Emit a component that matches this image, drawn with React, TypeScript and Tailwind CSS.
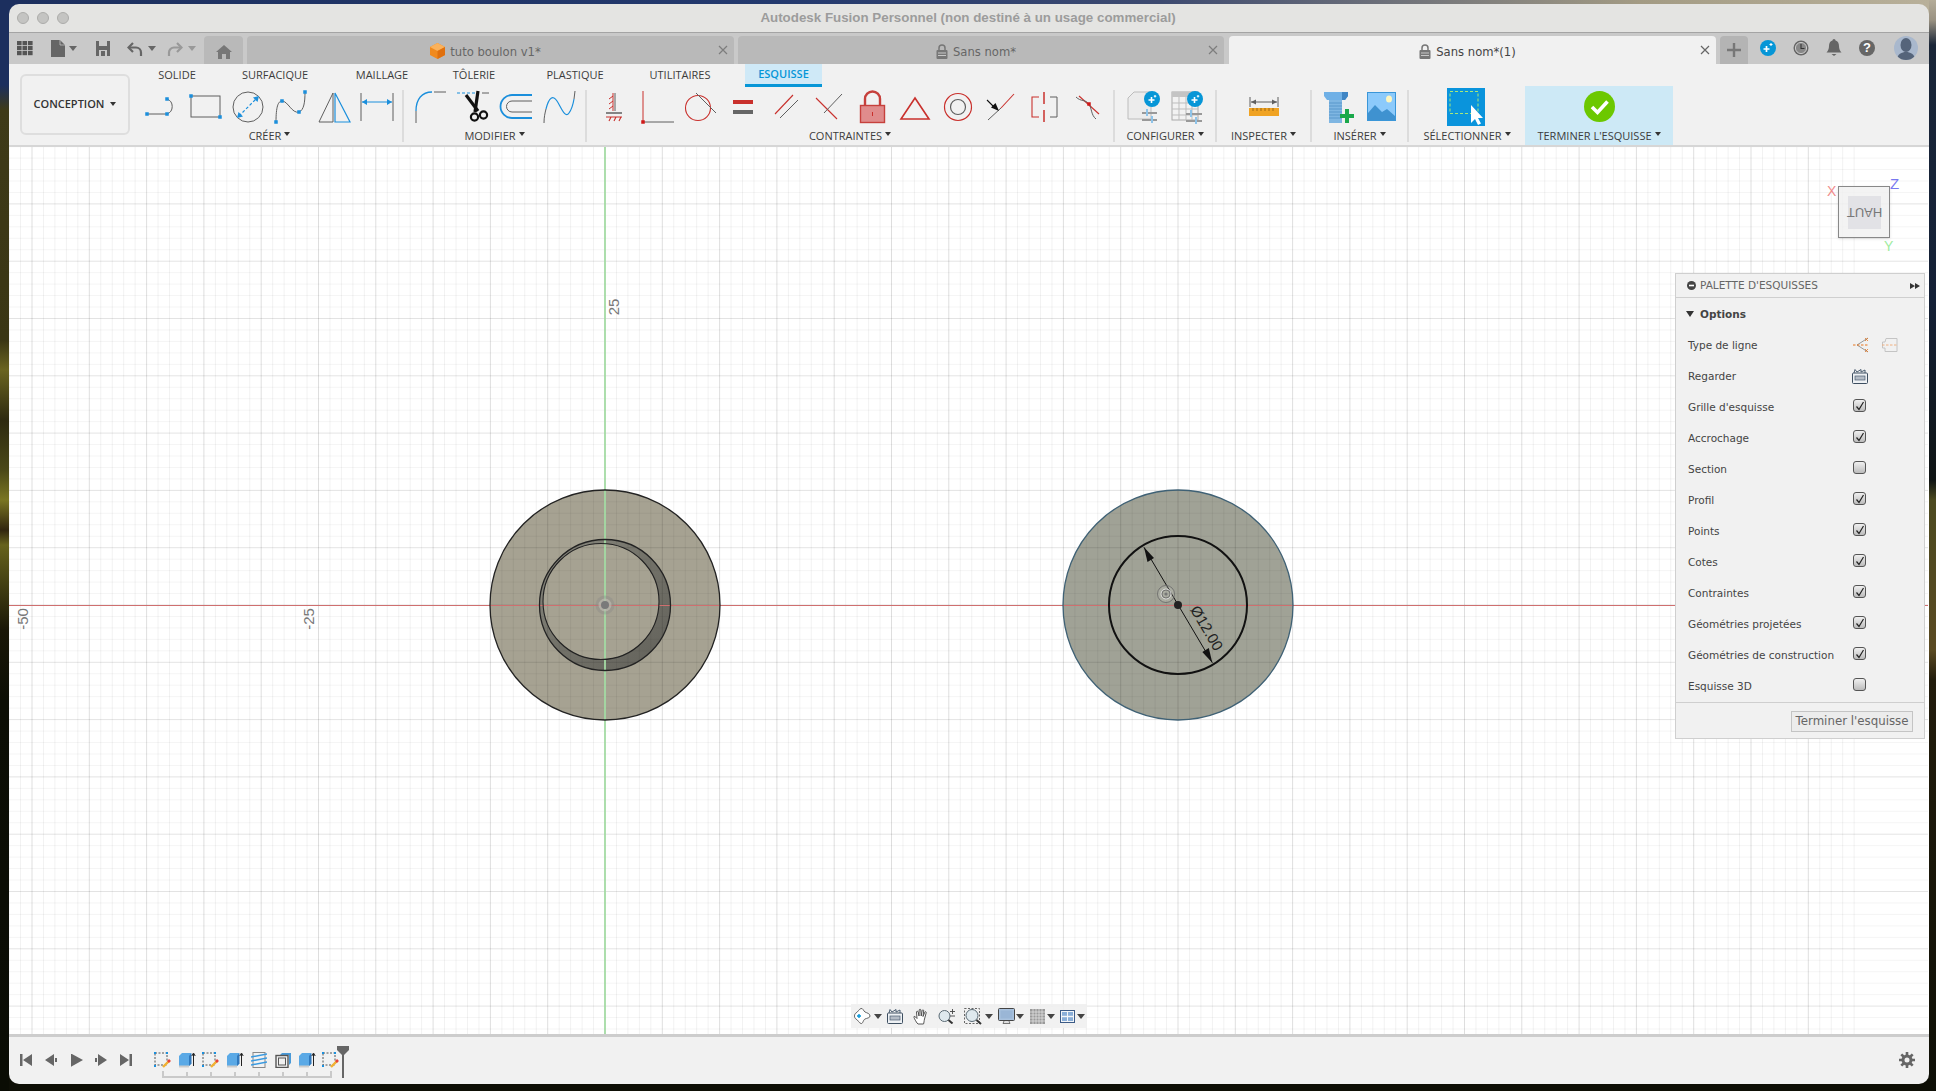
import React from "react";

const GRAY = "#5f5f5f";
const BLUE = "#1b8fdc";
const RED = "#c9302c";

const Ico = ({ children, s = 40 }: { children: React.ReactNode; s?: number }) => (
  <svg width={s} height={s} viewBox={`0 0 ${s} ${s}`} fill="none" className="shrink-0">
    {children}
  </svg>
);
const Sq = ({ x, y, c = BLUE, s = 3.5 }: { x: number; y: number; c?: string; s?: number }) => (
  <rect x={x - s / 2} y={y - s / 2} width={s} height={s} fill={c} />
);
const Caret = ({ c = "#444" }: { c?: string }) => (
  <svg width="8" height="5" viewBox="0 0 8 5" className="shrink-0">
    <path d="M0 0H8L4 5Z" fill={c} />
  </svg>
);
const SmallCaret = () => (
  <svg width="6" height="4" viewBox="0 0 6 4" className="shrink-0 -mt-[2px]">
    <path d="M0 0H6L3 4Z" fill="#333" />
  </svg>
);
const Badge = ({ x, y }: { x: number; y: number }) => (
  <g>
    <circle cx={x} cy={y} r="8" fill="#0696d7" />
    <path d={`M${x - 3.5} ${y + 1}h6M${x - 0.5} ${y - 2}v6`} stroke="#fff" strokeWidth="1.6" />
    <path d={`M${x + 3} ${y - 4}v2.5M${x + 1.8} ${y - 2.8}h2.5`} stroke="#fff" strokeWidth="1" />
  </g>
);

const createIcons = [
  <Ico key="a"><path d="M5 27H25A8 8 0 0 0 25 12" stroke={GRAY} strokeWidth="1" /><Sq x={5} y={27} /><Sq x={25} y={27} /><Sq x={25} y={12} /></Ico>,
  <Ico key="b"><rect x="6" y="9" width="29" height="21" stroke={GRAY} strokeWidth="1" /><Sq x={6} y={9} /><Sq x={35} y={30} /></Ico>,
  <Ico key="c"><circle cx="20" cy="20" r="15" stroke={GRAY} strokeWidth="1" /><path d="M11 29L29 11" stroke={BLUE} strokeWidth="1.2" strokeDasharray="3 2" /><path d="M9 31l1.5-6 4.5 4.5zM31 9l-1.5 6-4.5-4.5z" fill={BLUE} /></Ico>,
  <Ico key="d"><path d="M5 35C5 20 7 14 11 14C17 14 21 27 28 25C33 23 34 15 34 5" stroke={GRAY} strokeWidth="1" /><Sq x={5} y={35} /><Sq x={11} y={14} /><Sq x={28} y={25} /><Sq x={34} y={5} /></Ico>,
  <Ico key="e"><path d="M5 35L19 6V35Z" stroke={GRAY} strokeWidth="1" /><path d="M21 6L36 35H21Z" stroke={BLUE} strokeWidth="1.2" /></Ico>,
  <Ico key="f"><path d="M4 6V34M36 6V34" stroke={GRAY} strokeWidth="1" /><path d="M5 15H35" stroke={BLUE} strokeWidth="1" /><path d="M5 15l5-3v6zM35 15l-5-3v6z" fill={BLUE} /></Ico>,
];
const modifyIcons = [
  <Ico key="a"><path d="M24 5H36M6 24V36" stroke={GRAY} strokeWidth="1" /><path d="M6 24C6 12 12 5 22 5" stroke={BLUE} strokeWidth="1.3" /></Ico>,
  <Ico key="b"><path d="M4 6H23" stroke={BLUE} strokeWidth="1.2" strokeDasharray="3 2" /><path d="M29 6H36" stroke={GRAY} strokeWidth="1" /><path d="M13 8L25 24" stroke="#111" strokeWidth="3.2" /><path d="M25 4L22 25" stroke="#111" strokeWidth="3.2" /><circle cx="21.5" cy="30" r="3.6" stroke="#111" strokeWidth="2.2" /><circle cx="30.5" cy="28" r="3.6" stroke="#111" strokeWidth="2.2" /></Ico>,
  <Ico key="c"><path d="M36 8H16A11.5 11.5 0 0 0 16 31H36" stroke={BLUE} strokeWidth="1.8" /><path d="M36 14H16A5.5 5.5 0 0 0 16 25H36" stroke={GRAY} strokeWidth="1" /></Ico>,
  <Ico key="d"><path d="M5 36C5 30 6 26 7 22M35 12L36 4" stroke={GRAY} strokeWidth="1" /><path d="M7 22C10 10 14 8 18 14S26 32 30 26C33 22 34 18 35 12" stroke={BLUE} strokeWidth="1.2" /></Ico>,
];
const constraintIcons = [
  <Ico key="a"><path d="M21 6V24" stroke={GRAY} strokeWidth="1" /><path d="M19 6V24M19 9l-4 3M19 14l-4 3M19 19l-4 3" stroke={RED} strokeWidth="1" /><path d="M12 26H28" stroke={GRAY} strokeWidth="1.3" /><path d="M12 30H28M15 34l2-4M20 34l2-4M25 34l2-4" stroke={RED} strokeWidth="1.1" /></Ico>,
  <Ico key="b"><path d="M6 4V35" stroke={RED} strokeWidth="1" /><path d="M6 35H37" stroke={GRAY} strokeWidth="1" /><Sq x={6} y={35} c="#d01818" /></Ico>,
  <Ico key="c"><circle cx="18" cy="21" r="12.5" stroke={RED} strokeWidth="1.1" /><path d="M16 6L36 26" stroke={GRAY} strokeWidth="1" /></Ico>,
  <Ico key="d"><rect x="10" y="13" width="20" height="4" fill={RED} /><rect x="10" y="23" width="20" height="4" fill="#666" /></Ico>,
  <Ico key="e"><path d="M27 8L9 27" stroke={RED} strokeWidth="1.1" /><path d="M32 13L14 31" stroke={GRAY} strokeWidth="1" /></Ico>,
  <Ico key="f"><path d="M7 11L28 32" stroke={RED} strokeWidth="1.1" /><path d="M33 7L15 26" stroke={GRAY} strokeWidth="1" /></Ico>,
  <Ico key="g"><path d="M13 18V12A7.5 7.5 0 0 1 28 12V18" stroke="#c6403c" strokeWidth="2.4" /><rect x="8.5" y="18.5" width="24" height="17" fill="#e08c8c" stroke="#c6403c" strokeWidth="1.4" /><path d="M20.5 25V29" stroke={RED} strokeWidth="1" /></Ico>,
  <Ico key="h"><path d="M20 11L34 32H6Z" stroke={RED} strokeWidth="1.6" /></Ico>,
  <Ico key="i"><circle cx="20" cy="20" r="13.5" stroke={RED} strokeWidth="1.2" /><circle cx="20" cy="20" r="7.5" stroke={GRAY} strokeWidth="1.2" /></Ico>,
  <Ico key="j"><path d="M7 33L20 21" stroke={GRAY} strokeWidth="1" /><path d="M20 21L33 7" stroke={RED} strokeWidth="1.1" /><path d="M6 13L13 20" stroke="#111" strokeWidth="1.1" /><path d="M18 24L10 20.5L14.5 16Z" fill="#111" /></Ico>,
  <Ico key="k"><path d="M20 5V17M20 23V35" stroke={RED} strokeWidth="1.5" /><path d="M15 10H8V30H15" stroke={RED} strokeWidth="1.1" /><path d="M26 10H33V30H26" stroke={GRAY} strokeWidth="1" /></Ico>,
  <Ico key="l"><path d="M12 9L32 27" stroke={RED} strokeWidth="1.1" /><path d="M9 10C14 15 18 12 22 17C25 22 24 28 29 32" stroke={GRAY} strokeWidth="1" /><Sq x={22} y={17} c="#d01818" /></Ico>,
];
const configIcons = [
  <Ico key="a"><path d="M11 5H28V32H5V11Z" fill="#ececec" stroke="#bcbcbc" /><path d="M19 26H34M19 33H34" stroke="#999" strokeWidth="1.8" /><path d="M24 22V29M29 29V36" stroke="#8ec4ea" strokeWidth="2" /><Badge x={29} y={12} /></Ico>,
  <Ico key="b"><rect x="5" y="5" width="26" height="28" fill="#f2f2f2" stroke="#aaa" /><rect x="5" y="5" width="26" height="5" fill="#c4c4c4" /><path d="M5 16H31M5 22H31M5 28H31M12 10V33M19 10V33M25 10V33" stroke="#bdbdbd" /><path d="M19 27H35M19 34H35" stroke="#999" strokeWidth="1.8" /><path d="M24 23V30M29 30V37" stroke="#8ec4ea" strokeWidth="2" /><Badge x={28} y={12} /></Ico>,
];
const insertIcons = [
  <Ico key="a"><path d="M6 5H30V9L27 13H9L6 9Z" fill="#6fb0e6" /><path d="M24 5H30V9L27 13H24Z" fill="#3f85c4" /><rect x="11" y="13" width="13" height="23" fill="#7fb6e2" /><path d="M11 16H24M11 19H24M11 22H24M11 25H24M11 28H24M11 31H24" stroke="#5b98cc" /><path d="M29 22V36M22 29H36" stroke="#1aa84b" strokeWidth="4" /></Ico>,
  <Ico key="b"><rect x="6.5" y="5.5" width="28" height="28" fill="#8ccafb" stroke="#3a96d8" /><ellipse cx="28" cy="12" rx="3" ry="3.5" fill="#fdf6c0" /><path d="M7 26L14 18L21 25L26 22L34 29V33H7Z" fill="#3f92d0" /></Ico>,
];

const GroupLabel = ({ label }: { label: string }) => (
  <div className="h-[18px] pb-[2px] flex items-center gap-[3px] text-[11px] leading-none text-[#3c3c3c]">
    <span>{label}</span><SmallCaret />
  </div>
);
const Group = ({ w, label, icons, cell = "w-[43px]" }: { w: string; label: string; icons: React.ReactNode[]; cell?: string }) => (
  <div className={`${w} flex flex-col items-center shrink-0`}>
    <div className="flex h-[40px] justify-center">
      {icons.map((ic, i) => (
        <div key={i} className={`${cell} flex justify-center`}>{ic}</div>
      ))}
    </div>
    <GroupLabel label={label} />
  </div>
);
const Sep = () => <div className="w-[2px] h-[52px] mt-[3px] bg-[#dcdcdc] shrink-0" />;

const Lock = () => (
  <svg width="12" height="15" viewBox="0 0 12 15" className="shrink-0 mt-[2px]">
    <path d="M3 6V4a3 3 0 0 1 6 0V6" fill="none" stroke="#777" strokeWidth="1.5" />
    <rect x="0.5" y="6" width="11" height="9" rx="1" fill="#777" />
    <path d="M2 9H10M2 11.5H10" stroke="#ddd" strokeWidth="0.8" />
  </svg>
);
const CloseX = ({ c = "#777" }: { c?: string }) => (
  <svg width="10" height="10" viewBox="0 0 10 10" className="absolute right-[6px] top-[9px]">
    <path d="M1 1L9 9M9 1L1 9" stroke={c} strokeWidth="1.2" />
  </svg>
);

const Tab = ({ w, active, icon, text }: { w: string; active?: boolean; icon: React.ReactNode; text: string }) => (
  <div className={`${w} h-[28px] relative rounded-t-[4px] pr-[10px] flex items-center justify-center gap-[5px] shrink-0 ${active ? "bg-[#f1f1f1] text-[#444]" : "bg-[#b9b9b9] text-[#666]"}`}>
    {icon}
    <span className="text-[11.6px] font-['DejaVu_Sans',sans-serif] pt-[5px]">{text}</span>
    <CloseX c={active ? "#666" : "#7d7d7d"} />
  </div>
);

const TabBar = () => (
  <div className="h-[31px] bg-[#c9c9c9] flex items-end shrink-0">
    <div className="h-[31px] flex items-center self-end pl-[8px] pb-[1px]">
      <svg width="16" height="15" viewBox="0 0 16 15" className="shrink-0">
        {[0, 5.5, 11].map((x) => [0, 5, 10].map((y) => <rect key={`${x}${y}`} x={x} y={y} width="4.6" height="4.2" fill="#555" />))}
      </svg>
      <svg width="14" height="17" viewBox="0 0 14 17" className="ml-[18px] shrink-0"><path d="M0 0H9L14 5V17H0Z" fill="#666" /><path d="M9 0V5H14" fill="none" stroke="#ccc" strokeWidth="0.7" /></svg>
      <div className="ml-[4px]"><Caret c="#666" /></div>
      <svg width="14" height="15" viewBox="0 0 14 15" className="ml-[19px] shrink-0"><path d="M0 0H14V15H0Z" fill="#666" /><rect x="3" y="0" width="8" height="5" fill="#c9c9c9" /><rect x="3" y="9" width="8" height="6" fill="#c9c9c9" /><rect x="5" y="10" width="4" height="5" fill="#666" /></svg>
      <svg width="16" height="15" viewBox="0 0 16 15" className="ml-[17px] shrink-0"><path d="M6 2L1.5 6.5L6 11" fill="none" stroke="#666" strokeWidth="2.2" /><path d="M2 6.5H9A5 5 0 0 1 14 11.5V15" fill="none" stroke="#666" strokeWidth="2.2" /></svg>
      <div className="ml-[5px]"><Caret c="#666" /></div>
      <svg width="16" height="15" viewBox="0 0 16 15" className="ml-[11px] shrink-0"><path d="M10 2L14.5 6.5L10 11" fill="none" stroke="#999" strokeWidth="2.2" /><path d="M14 6.5H7A5 5 0 0 0 2 11.5V15" fill="none" stroke="#999" strokeWidth="2.2" /></svg>
      <div className="ml-[5px]"><Caret c="#999" /></div>
    </div>
    <div className="ml-[8px] w-[39px] h-[28px] bg-[#b9b9b9] rounded-t-[4px] flex items-center justify-center shrink-0 pt-[3px]">
      <svg width="16" height="14" viewBox="0 0 16 14"><path d="M8 0L16 7H14V14H10V9H6V14H2V7H0Z" fill="#777" /></svg>
    </div>
    <div className="ml-[4px]">
      <Tab w="w-[487px]" text="tuto boulon v1*" icon={
        <svg width="15" height="16" viewBox="0 0 15 16" className="shrink-0 mt-[2px]"><path d="M7.5 0L15 4V12L7.5 16L0 12V4Z" fill="#f08a1e" /><path d="M7.5 0L15 4L7.5 8L0 4Z" fill="#fbb25c" /><path d="M7.5 8L15 4V12L7.5 16Z" fill="#e0700e" /></svg>
      } />
    </div>
    <div className="ml-[4px]"><Tab w="w-[486px]" text="Sans nom*" icon={<Lock />} /></div>
    <div className="ml-[5px]"><Tab w="w-[487px]" active text="Sans nom*(1)" icon={<Lock />} /></div>
    <div className="ml-[4px] w-[28px] h-[28px] bg-[#b4b4b4] rounded-t-[4px] flex items-center justify-center shrink-0">
      <svg width="14" height="14" viewBox="0 0 14 14"><path d="M7 0V14M0 7H14" stroke="#777" strokeWidth="2.4" /></svg>
    </div>
    <div className="h-[31px] flex items-center pb-[2px]">
      <svg width="16" height="16" viewBox="0 0 16 16" className="ml-[12px] shrink-0"><circle cx="8" cy="8" r="8" fill="#0696d7" /><path d="M3.5 9h6M6.5 6v6" stroke="#fff" strokeWidth="1.7" /><path d="M11 3v3M9.5 4.5h3" stroke="#fff" strokeWidth="1.1" /></svg>
      <svg width="16" height="16" viewBox="0 0 16 16" className="ml-[17px] shrink-0"><circle cx="8" cy="8" r="7.5" fill="#666" /><circle cx="8" cy="8" r="5.6" fill="#888" stroke="#eee" strokeWidth="0.7" /><path d="M8 4V8.5H11.5" fill="none" stroke="#333" strokeWidth="1.1" /></svg>
      <svg width="16" height="17" viewBox="0 0 16 17" className="ml-[17px] shrink-0"><path d="M8 0C9 0 9.5 1 9.5 1.6C12 2.5 13 4.5 13 7C13 10 14 12 15.5 13.5H0.5C2 12 3 10 3 7C3 4.5 4 2.5 6.5 1.6C6.5 1 7 0 8 0Z" fill="#666" /><path d="M5.5 15h5l-2.5 2z" fill="#666" /></svg>
      <div className="ml-[17px] w-[16px] h-[16px] rounded-full bg-[#666] text-white flex items-center justify-center text-[13px] font-bold leading-none font-['Liberation_Sans',sans-serif] shrink-0">?</div>
      <div className="ml-[19px] w-[24px] h-[24px] rounded-full bg-[#a9b8cd] overflow-hidden shrink-0">
        <svg width="24" height="24" viewBox="0 0 24 24"><ellipse cx="12" cy="9" rx="5.5" ry="7" fill="#55647a" /><path d="M3 24C3 18 8 16 12 16S21 18 21 24Z" fill="#55647a" /></svg>
      </div>
    </div>
  </div>
);

const Ribbon = () => (
  <div className="h-[83px] bg-[#f1f1f1] border-b-2 border-[#d6d6d6] flex shrink-0 font-['Open_Sans',sans-serif]">
    <div className="ml-[11px] mt-[10px] w-[110px] h-[61px] rounded-md border-2 border-[#dedede] flex items-center justify-center gap-[6px] text-[11px] font-semibold text-[#333] shrink-0">
      <span>CONCEPTION</span><SmallCaret />
    </div>
    <div className="ml-[7px] flex flex-col">
      <div className="h-[23px] flex text-[11px] text-[#3c3c3c] shrink-0">
        {[["w-[80px]", "SOLIDE"], ["w-[116px]", "SURFACIQUE"], ["w-[98px]", "MAILLAGE"], ["w-[86px]", "TÔLERIE"], ["w-[116px]", "PLASTIQUE"], ["w-[94px]", "UTILITAIRES"]].map(([w, t]) => (
          <div key={t} className={`${w} flex items-center justify-center`}>{t}</div>
        ))}
        <div className="ml-[18px] w-[77px] bg-[#cfe9f7] border-b-[3px] border-[#0696d7] text-[#0696d7] font-semibold flex items-center justify-center">ESQUISSE</div>
      </div>
      <div className="flex">
        <Group w="w-[265px]" label="CRÉER" icons={createIcons} /><Sep />
        <Group w="w-[181px]" label="MODIFIER" icons={modifyIcons} /><Sep />
        <Group w="w-[526px]" label="CONTRAINTES" icons={constraintIcons} /><Sep />
        <Group w="w-[100px]" label="CONFIGURER" icons={configIcons} cell="w-[44px]" /><Sep />
        <Group w="w-[93px]" label="INSPECTER" icons={[
          <Ico key="a"><path d="M6 10V20M34 10V20" stroke={GRAY} strokeWidth="1" /><path d="M7 15H33" stroke={GRAY} strokeWidth="1" /><path d="M7 15l5-2.5v5zM33 15l-5-2.5v5z" fill={GRAY} /><rect x="5" y="21" width="30" height="8" fill="#f0a323" /><path d="M9 21v3M13 21v3M17 21v3M21 21v3M25 21v3M29 21v3" stroke="#8a5a10" strokeWidth="0.8" /></Ico>,
        ]} /><Sep />
        <Group w="w-[95px]" label="INSÉRER" icons={insertIcons} /><Sep />
        <div className="w-[116px] flex flex-col items-center shrink-0">
          <div className="h-[40px] flex justify-center pt-px pr-[3px]">
            <svg width="38" height="38" viewBox="0 0 38 38">
              <rect width="38" height="38" fill="#0a94dc" />
              <rect x="3" y="3.5" width="28" height="22" fill="none" stroke="#a8e87a" strokeDasharray="3 2" />
              <path d="M24 17V35L28 31L31 37L34 35.5L31 30H36Z" fill="#fff" />
            </svg>
          </div>
          <GroupLabel label="SÉLECTIONNER" />
        </div>
        <div className="w-[148px] -mt-px h-[59px] bg-[#cde9f6] flex flex-col items-center shrink-0">
          <div className="h-[41px] flex items-center justify-center">
            <svg width="31" height="31" viewBox="0 0 31 31"><circle cx="15.5" cy="15.5" r="15.5" fill="#6cc800" /><path d="M8 16L13.5 21.5L23.5 10.5" fill="none" stroke="#fff" strokeWidth="3.6" /></svg>
          </div>
          <GroupLabel label="TERMINER L'ESQUISSE" />
        </div>
      </div>
    </div>
  </div>
);

const Sketch = () => {
  const vs = Array.from({ length: 170 }, (_, i) => i - 60);
  return (
    <svg width="1919" height="887" viewBox="9 147 1919 887" className="absolute left-0 top-0">
      <defs>
        <linearGradient id="cres" x1="0" y1="0" x2="1" y2="1">
          <stop offset="0" stopColor="#8d8c82" />
          <stop offset="0.45" stopColor="#74736a" />
          <stop offset="1" stopColor="#62615a" />
        </linearGradient>
      </defs>
      <circle cx="605" cy="605" r="115" fill="#a6a292" />
      <circle cx="605" cy="605" r="65.5" fill="url(#cres)" />
      <circle cx="601" cy="601.5" r="58" fill="#a6a292" />
      <circle cx="1178" cy="605" r="115" fill="#a0a296" />
      {vs.map((k) => (
        <line key={`v${k}`} x1={605 + k * 11.46} x2={605 + k * 11.46} y1="147" y2="1034" stroke="#000" strokeOpacity={k % 5 === 0 ? 0.13 : 0.055} />
      ))}
      {vs.map((k) => (
        <line key={`h${k}`} y1={605 + (k - 60) * 11.46} y2={605 + (k - 60) * 11.46} x1="9" x2="1928" stroke="#000" strokeOpacity={(k - 60) % 5 === 0 ? 0.11 : 0.045} />
      ))}
      <line x1="605" x2="605" y1="147" y2="1034" stroke="#a5dca5" strokeWidth="1.8" />
      <line x1="9" x2="1928" y1="605.5" y2="605.5" stroke="#cf6f6f" strokeWidth="1.1" />
      <circle cx="605" cy="605" r="115" fill="none" stroke="#222" strokeWidth="1.3" />
      <circle cx="605" cy="605" r="65.5" fill="none" stroke="#222" strokeWidth="1.3" />
      <circle cx="601" cy="601.5" r="58" fill="none" stroke="#222" strokeWidth="1.1" />
      <circle cx="605" cy="605" r="9.5" fill="#888" fillOpacity="0.35" />
      <circle cx="605" cy="605" r="6.5" fill="#c4c2b8" fillOpacity="0.55" />
      <circle cx="605" cy="605" r="4" fill="#7a7a7a" />

      <circle cx="1178" cy="605" r="115" fill="none" stroke="#3f6175" strokeWidth="1.3" />
      <circle cx="1178" cy="605" r="69" fill="none" stroke="#111" strokeWidth="2" />
      <path d="M1144 547.3L1212.3 662.7" stroke="#111" strokeWidth="1" />
      <path d="M1144 547.3L1147.5 562L1154 558Z" fill="#111" />
      <path d="M1212.3 662.7L1208.8 648L1202.3 652Z" fill="#111" />
      <circle cx="1178" cy="605" r="4" fill="#222" />
      <circle cx="1166" cy="594" r="8.5" fill="#fff" fillOpacity="0.12" stroke="#666" strokeWidth="0.8" />
      <circle cx="1166" cy="594" r="5" fill="none" stroke="#ddd" strokeWidth="1" />
      <circle cx="1166" cy="594" r="4" fill="none" stroke="#666" strokeWidth="0.8" />
      <circle cx="1166" cy="594" r="1.6" fill="#777" />
      <text x="1207" y="628" transform="rotate(59.4 1207 628)" textAnchor="middle" dominantBaseline="central" fontFamily="'Liberation Sans',sans-serif" fontSize="15" fill="#222">Ø12.00</text>

      <text x="619" y="307" transform="rotate(-90 619 307)" textAnchor="middle" fontFamily="'Liberation Sans',sans-serif" fontSize="15" fill="#777">25</text>
      <text x="314" y="619" transform="rotate(-90 314 619)" textAnchor="middle" fontFamily="'Liberation Sans',sans-serif" fontSize="15" fill="#777">-25</text>
      <text x="28" y="619" transform="rotate(-90 28 619)" textAnchor="middle" fontFamily="'Liberation Sans',sans-serif" fontSize="15" fill="#777">-50</text>
    </svg>
  );
};

const Check = ({ on }: { on?: boolean }) => (
  <div className="w-[13px] h-[13px] -mt-[4px] rounded-[3px] border border-[#555] bg-gradient-to-b from-[#f0f0f0] to-[#bcbcbc] flex items-center justify-center shrink-0">
    {on && <svg width="10" height="10" viewBox="0 0 10 10"><path d="M1.5 5.5L4 8.5L8.5 1" fill="none" stroke="#222" strokeWidth="1.2" /></svg>}
  </div>
);

const LookAt = () => (
  <svg width="16" height="16" viewBox="0 0 16 16" className="shrink-0">
    <path d="M2 5L3 1.5L5 4L9 1.5V4L13 2V5" fill="none" stroke="#4b5d70" />
    <rect x="0.5" y="5" width="15" height="10.5" rx="1" fill="#eef1f4" stroke="#3d4e60" />
    <rect x="3" y="8" width="10" height="4" fill="#b4bcc6" stroke="#4b5d70" strokeWidth="0.7" />
  </svg>
);

const rows: [string, boolean][] = [
  ["Grille d'esquisse", true], ["Accrochage", true], ["Section", false], ["Profil", true], ["Points", true], ["Cotes", true],
  ["Contraintes", true], ["Géométries projetées", true], ["Géométries de construction", true], ["Esquisse 3D", false],
];

const Row = ({ label, children }: { label: string; children: React.ReactNode }) => (
  <div className="h-[31px] flex items-center pl-[12px]">
    <div className="w-[165px] text-[#444] shrink-0">{label}</div>
    {children}
  </div>
);

const Palette = () => (
  <div className="absolute left-[1666px] top-[126px] w-[250px] h-[466px] bg-[#f1f1f1] border border-[#cfcfcf] flex flex-col text-[10.5px] font-['DejaVu_Sans',sans-serif]">
    <div className="h-[24px] border-b border-[#cfcfcf] flex items-center pl-[11px] pr-[4px] gap-[4px] text-[#666] shrink-0">
      <svg width="9" height="9" viewBox="0 0 9 9" className="shrink-0"><circle cx="4.5" cy="4.5" r="4.5" fill="#444" /><rect x="2" y="3.7" width="5" height="1.6" fill="#fff" /></svg>
      <span className="flex-1">PALETTE D'ESQUISSES</span>
      <svg width="10" height="6" viewBox="0 0 10 6" className="shrink-0"><path d="M0 0L5 3L0 6ZM5 0L10 3L5 6Z" fill="#333" /></svg>
    </div>
    <div className="h-[32px] pt-px flex items-center pl-[10px] gap-[6px] shrink-0">
      <svg width="8" height="6" viewBox="0 0 8 6" className="shrink-0 -mt-[2px]"><path d="M0 0H8L4 6Z" fill="#333" /></svg>
      <span className="font-bold text-[#444]">Options</span>
    </div>
    <Row label="Type de ligne">
      <svg width="16" height="16" viewBox="0 0 16 16" className="shrink-0 -mt-[1px]"><path d="M15 1L4 8L15 15" fill="none" stroke="#999" /><path d="M0 8H16" stroke="#e8771f" strokeDasharray="2.5 1.5" /><path d="M12 1l3 3M15 1l-3 3M12 12l3 3M15 12l-3 3" stroke="#e8771f" strokeWidth="0.8" /></svg>
      <svg width="16" height="14" viewBox="0 0 16 14" className="ml-[13px] shrink-0 -mt-[1px]"><path d="M4 .5H15V13.5H3V10H.5V4H3Z" fill="none" stroke="#c4c4c4" /><path d="M0 7H16" stroke="#f0b080" strokeDasharray="2.5 1.5" /></svg>
    </Row>
    <Row label="Regarder"><div className="-mt-px -ml-px"><LookAt /></div></Row>
    {rows.map(([t, on]) => (
      <Row key={t} label={t}><Check on={on} /></Row>
    ))}
    <div className="flex-1 border-t border-[#cfcfcf] flex justify-end pt-[8px] pr-[11px]">
      <div className="w-[122px] h-[21px] bg-[#ececec] border border-[#c4c4c4] flex items-center justify-center text-[#666] text-[11.8px]">Terminer l'esquisse</div>
    </div>
  </div>
);

const ViewCube = () => (
  <>
    <div className="absolute left-[1829px] top-[39px] w-[52px] h-[52px] border border-[#888] bg-[#f0f0f0]/80 flex items-center justify-center shadow-sm">
      <div className="w-[33px] h-[33px] bg-[#e2e2e6] rotate-180 flex items-center justify-center text-[#777] text-[13px] font-['Liberation_Sans',sans-serif]">HAUT</div>
    </div>
    <span className="absolute left-[1818px] top-[37px] text-[#f08c8c] text-[14px] leading-none font-['Liberation_Sans',sans-serif]">X</span>
    <span className="absolute left-[1881px] top-[29px] text-[#7878f0] text-[15px] leading-none font-['Liberation_Sans',sans-serif]">Z</span>
    <span className="absolute left-[1875px] top-[92px] text-[#a0eca0] text-[14px] leading-none font-['Liberation_Sans',sans-serif]">Y</span>
  </>
);

const Cell = ({ w, children, ml = "" }: { w: string; ml?: string; children: React.ReactNode }) => (
  <div className={`${w} ${ml} flex justify-center items-center shrink-0`}>{children}</div>
);

const NavBar = () => (
  <div className="absolute left-[842px] bottom-[6px] w-[236px] h-[24px] bg-[#efefef]/90 flex items-center">
    <Cell w="w-[22px]">
      <svg width="18" height="18" viewBox="0 0 18 18"><path d="M3 6C5 5 6 2 8 1.5C10 1 10.5 4 12 5C14 6 17 6.5 17 9C17 11 14 11 12 12C10 13 10 17 8 16.5C6 16 5 13 3 12C1 11 1 7 3 6Z" fill="#fff" stroke="#555" strokeWidth="0.9" /><path d="M4 9H8M6 7V11" stroke="#0696d7" strokeWidth="1.4" /></svg>
    </Cell>
    <Cell w="w-[10px]"><Caret /></Cell>
    <Cell w="w-[22px]" ml="ml-[1px]"><LookAt /></Cell>
    <Cell w="w-[22px]" ml="ml-[4px]">
      <svg width="17" height="17" viewBox="0 0 17 17"><path d="M4 15C2 12 .5 9 1 8.5C2 8 3.5 10 4 10.5L3.5 4C3.5 3 5 3 5.2 4L6 8L6.2 2C6.3 1 7.8 1 7.8 2L8.2 8L9.2 2.5C9.4 1.5 10.8 1.7 10.7 2.8L10 8.5L11.8 4.2C12.2 3.2 13.5 3.7 13.2 4.8L11.5 11C11 13 11 15 10.5 16H5Z" fill="#fff" stroke="#444" strokeWidth="0.9" /></svg>
    </Cell>
    <Cell w="w-[22px]" ml="ml-[4px]">
      <svg width="18" height="16" viewBox="0 0 18 16"><circle cx="6.5" cy="8" r="5.5" fill="#dfe9ee" stroke="#5a6a74" /><path d="M10.5 12L14.5 15.5" stroke="#333" strokeWidth="2" /><path d="M12 3.5h5M14.5 1v5M12 8h5" stroke="#444" strokeWidth="0.9" /></svg>
    </Cell>
    <Cell w="w-[22px]" ml="ml-[4px]">
      <svg width="18" height="17" viewBox="0 0 18 17"><rect x=".5" y=".5" width="15" height="15" fill="none" stroke="#666" strokeDasharray="2 1.5" /><circle cx="8" cy="7.5" r="6" fill="#dfe9ee" stroke="#5a6a74" /><path d="M12.5 12L17 16" stroke="#333" strokeWidth="2" /></svg>
    </Cell>
    <Cell w="w-[10px]"><Caret /></Cell>
    <Cell w="w-[20px]" ml="ml-[2px]">
      <svg width="17" height="16" viewBox="0 0 17 16"><rect x=".5" y=".5" width="16" height="12" rx="1" fill="#a9c2de" stroke="#444" /><rect x="2.5" y="2.5" width="12" height="8" fill="#9ab6d6" /><path d="M6 13L5 15.5H12L11 13" fill="#ddd" stroke="#444" strokeWidth="0.7" /></svg>
    </Cell>
    <Cell w="w-[8px]"><Caret /></Cell>
    <Cell w="w-[20px]" ml="ml-[3px]">
      <svg width="15" height="15" viewBox="0 0 15 15"><rect width="15" height="15" fill="#9a9a9a" /><path d="M3 0V15M6 0V15M9 0V15M12 0V15M0 3H15M0 6H15M0 9H15M0 12H15" stroke="#e8e8e8" strokeWidth="0.7" /></svg>
    </Cell>
    <Cell w="w-[8px]"><Caret /></Cell>
    <Cell w="w-[20px]" ml="ml-[2px]">
      <svg width="15" height="13" viewBox="0 0 15 13"><rect x=".5" y=".5" width="14" height="12" fill="#f2f5f8" stroke="#3b5a86" /><rect x="2" y="2" width="5" height="3.8" fill="#89aed8" /><rect x="8" y="2" width="5" height="3.8" fill="#89aed8" /><rect x="2" y="7.2" width="5" height="3.8" fill="#89aed8" /><rect x="8" y="7.2" width="5" height="3.8" fill="#89aed8" /></svg>
    </Cell>
    <Cell w="w-[8px]"><Caret /></Cell>
  </div>
);

const TSketch = () => (
  <svg width="18" height="16" viewBox="0 0 18 16">
    <rect x="1" y="1" width="12" height="12" fill="none" stroke="#555" strokeDasharray="2 1.5" />
    <Sq x={1} y={1} s={2} /><Sq x={13} y={1} s={2} /><Sq x={1} y={14} s={2} />
    <path d="M9 15L15 9" stroke="#f2b233" strokeWidth="2.4" /><path d="M14 10L16 8" stroke="#e8443a" strokeWidth="2.6" />
  </svg>
);
const TExtrude = () => (
  <svg width="18" height="16" viewBox="0 0 18 16">
    <path d="M1 4L4 1H13V12L11 14H1Z" fill="#5aa9e6" /><path d="M11 14V4L13.5 1V11.5Z" fill="#2f78bd" /><path d="M1 14.5H11" stroke="#ccc" strokeWidth="2" />
    <path d="M15.5 14V2M13.8 4L15.5 1L17.2 4" stroke="#222" fill="none" />
  </svg>
);
const TThread = () => (
  <svg width="16" height="16" viewBox="0 0 16 16">
    <rect x="2" y="0.5" width="12" height="15" fill="#f2f2f2" stroke="#888" /><path d="M0 5L16 2M0 9L16 6M0 13L16 10" stroke="#3a9ae0" strokeWidth="1.4" />
  </svg>
);
const TShell = () => (
  <svg width="17" height="16" viewBox="0 0 17 16">
    <path d="M5 3L7 1H16V11L14 13V3Z" fill="#4a9ad8" /><rect x="1" y="3.5" width="12" height="12" fill="#f0f0f0" stroke="#555" strokeWidth="1.4" /><rect x="3.5" y="6" width="7" height="7" fill="none" stroke="#555" />
  </svg>
);

const Player = () => (
  <div className="h-[50px] bg-[#f1f1f1] border-t-[3px] border-[#cdcdcd] rounded-b-[10px] flex shrink-0 items-start">
    <div className="flex pl-[5px] pt-[17px]">
      {[
        <path key="1" d="M0 0H2.5V12H0ZM12 0V12L3 6Z" />,
        <path key="2" d="M9 0V12L0 6ZM10 4H12V8H10Z" />,
        <path key="3" d="M0 0L12 6L0 12Z" transform="translate(1 -0.5) scale(1 1.1)" />,
        <path key="4" d="M3 0V12L12 6ZM0 4H2V8H0Z" />,
        <path key="5" d="M0 0V12L9 6ZM9.5 0H12V12H9.5Z" />,
      ].map((p, i) => (
        <div key={i} className="w-[25px] flex justify-center">
          <svg width="13" height="13" viewBox="0 0 13 13" fill="#666">{p}</svg>
        </div>
      ))}
    </div>
    <div className="ml-[12px] mt-[11px] flex flex-col">
      <div className="flex h-[24px] items-center">
        {[<TSketch key="1" />, <TExtrude key="2" />, <TSketch key="3" />, <TExtrude key="4" />, <TThread key="5" />, <TShell key="6" />, <TExtrude key="7" />, <TSketch key="8" />].map((t, i) => (
          <div key={i} className="w-[24px] flex justify-center">{t}</div>
        ))}
      </div>
      <svg width="192" height="8" viewBox="0 0 192 8" className="-mt-px">
        <path d="M12 0V6H180V0M36 1V6M60 1V6M84 1V6M108 1V6M132 1V6M156 1V6" fill="none" stroke="#c9c9c9" strokeWidth="2" />
      </svg>
    </div>
    <svg width="14" height="32" viewBox="0 0 14 32" className="mt-[9px] -ml-[7px] shrink-0">
      <path d="M1 0H13V4L7 10L1 4Z" fill="#666" /><rect x="6" y="8" width="2" height="24" fill="#666" />
    </svg>
    <div className="ml-auto mr-[14px] mt-[15px]">
      <svg width="16" height="16" viewBox="0 0 16 16"><circle cx="8" cy="8" r="4" fill="none" stroke="#666" strokeWidth="3" /><path d="M8 0V3M8 13V16M0 8H3M13 8H16M2.3 2.3L4.5 4.5M11.5 11.5L13.7 13.7M13.7 2.3L11.5 4.5M4.5 11.5L2.3 13.7" stroke="#666" strokeWidth="2.6" /></svg>
    </div>
  </div>
);

export default function App() {
  return (
    <div className="w-[1936px] h-[1091px] flex overflow-hidden bg-[#0e0f06]">
      <div className="w-[9px] shrink-0 bg-[linear-gradient(180deg,#1c2f5e_0,#1c2f5e_85px,#3e3a18_110px,#3a3614_340px,#6a6420_370px,#2e2a10_420px,#4a4818_470px,#7a7622_500px,#32260f_530px,#66621c_545px,#1a1707_630px,#0c0e04_700px,#0a0c04_1091px)]" />
      <div className="w-[1920px] shrink-0 flex flex-col">
        <div className="h-[14px] shrink-0 bg-[linear-gradient(90deg,#1c2f5e_0,#23396e_40%,#3d4a70_60%,#a39b84_85%,#b8b09a_100%)]" />
        <div className="-mt-[10px] h-[1080px] relative rounded-t-[10px] flex flex-col overflow-hidden font-['Liberation_Sans',sans-serif]">
          <div className="h-[29px] bg-[#e4e4e2] border-b border-[#a4a4a4] flex items-center relative shrink-0">
            <div className="flex gap-[8px] ml-[8px]">
              {[0, 1, 2].map((i) => <div key={i} className="w-[12px] h-[12px] rounded-full bg-[#c4c4c2] border border-[#acacaa]" />)}
            </div>
            <div className="flex-1 text-center -ml-[62px] text-[13.35px] font-bold text-[#9c9c9c]">Autodesk Fusion Personnel (non destiné à un usage commercial)</div>
          </div>
          <TabBar />
          <Ribbon />
          <div className="flex-1 relative bg-white overflow-hidden">
            <Sketch />
            <ViewCube />
            <Palette />
            <NavBar />
          </div>
          <Player />
        </div>
      </div>
      <div className="w-[7px] shrink-0 bg-[linear-gradient(180deg,#b4ac98_0,#9a9282_20px,#1a2638_45px,#142036_300px,#0f1414_480px,#4c4a20_500px,#5a4a22_650px,#221c0c_680px,#0e0f06_1091px)]" />
    </div>
  );
}
